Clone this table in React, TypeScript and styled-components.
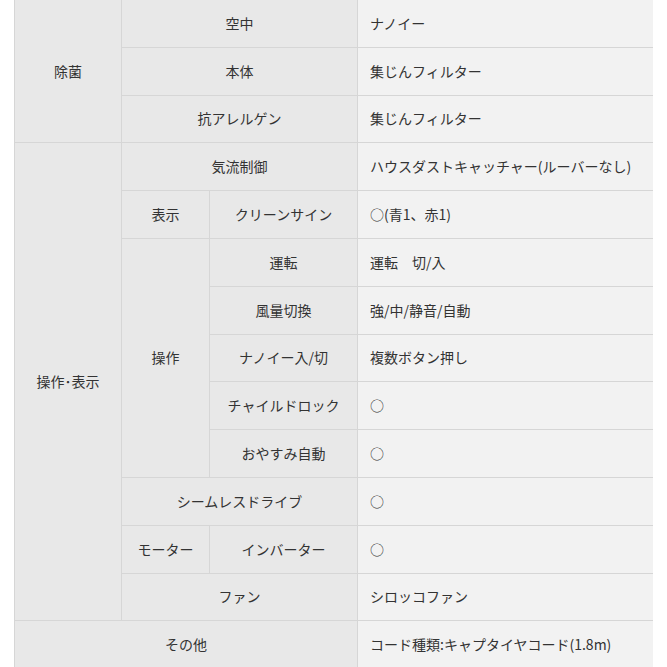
import React from 'react';
import styled, { createGlobalStyle } from 'styled-components';

const GlobalStyle = createGlobalStyle`
  html, body {
    margin: 0;
    padding: 0;
    background: #ffffff;
  }
  body {
    font-family: 'Noto Sans CJK JP', 'Noto Sans', sans-serif;
    color: #333333;
  }
`;

type Cell = {
  text: string;
  rowSpan?: number;
  colSpan?: number;
  value?: boolean;
};

const columnWidths = [107, 88, 148];

const rows: Cell[][] = [
  [
    { text: '除菌', rowSpan: 3 },
    { text: '空中', colSpan: 2 },
    { text: 'ナノイー', value: true },
  ],
  [
    { text: '本体', colSpan: 2 },
    { text: '集じんフィルター', value: true },
  ],
  [
    { text: '抗アレルゲン', colSpan: 2 },
    { text: '集じんフィルター', value: true },
  ],
  [
    { text: '操作･表示', rowSpan: 10 },
    { text: '気流制御', colSpan: 2 },
    { text: 'ハウスダストキャッチャー(ルーバーなし)', value: true },
  ],
  [
    { text: '表示' },
    { text: 'クリーンサイン' },
    { text: '○(青1、赤1)', value: true },
  ],
  [
    { text: '操作', rowSpan: 5 },
    { text: '運転' },
    { text: '運転　切/入', value: true },
  ],
  [
    { text: '風量切換' },
    { text: '強/中/静音/自動', value: true },
  ],
  [
    { text: 'ナノイー入/切' },
    { text: '複数ボタン押し', value: true },
  ],
  [
    { text: 'チャイルドロック' },
    { text: '○', value: true },
  ],
  [
    { text: 'おやすみ自動' },
    { text: '○', value: true },
  ],
  [
    { text: 'シームレスドライブ', colSpan: 2 },
    { text: '○', value: true },
  ],
  [
    { text: 'モーター' },
    { text: 'インバーター' },
    { text: '○', value: true },
  ],
  [
    { text: 'ファン', colSpan: 2 },
    { text: 'シロッコファン', value: true },
  ],
  [
    { text: 'その他', colSpan: 3 },
    { text: 'コード種類:キャプタイヤコード(1.8m)', value: true },
  ],
];

const App: React.FC = () => {
  return (
    <>
      <GlobalStyle />
      <Wrapper>
        <SpecTable>
          <colgroup>
            {columnWidths.map((w) => (
              <Col key={w} $width={w} />
            ))}
            <col />
          </colgroup>
          <tbody>
            {rows.map((row, i) => (
              <Row key={i}>
                {row.map((cell, j) =>
                  cell.value ? (
                    <ValueCell key={j}>{cell.text}</ValueCell>
                  ) : (
                    <LabelCell key={j} rowSpan={cell.rowSpan} colSpan={cell.colSpan}>
                      {cell.text}
                    </LabelCell>
                  ),
                )}
              </Row>
            ))}
          </tbody>
        </SpecTable>
      </Wrapper>
    </>
  );
};

export default App;

const Wrapper = styled.div`
  padding: 0 14px;
  margin-top: -1px;
`;

const SpecTable = styled.table`
  width: 100%;
  border-collapse: collapse;
  table-layout: fixed;
  font-size: 14px;
  line-height: 1.5;
`;

const Col = styled.col<{ $width: number }>`
  width: ${({ $width }) => $width}px;
`;

const Row = styled.tr`
  height: 47.8px;
`;

const LabelCell = styled.td`
  background: #e8e8e8;
  border: 1px solid #d6d6d6;
  text-align: center;
  vertical-align: middle;
  padding: 0 8px;
  white-space: nowrap;
`;

const ValueCell = styled.td`
  background: #f2f2f2;
  border: 1px solid #d6d6d6;
  border-right: none;
  text-align: left;
  vertical-align: middle;
  padding: 0 12px;
  white-space: nowrap;
`;
